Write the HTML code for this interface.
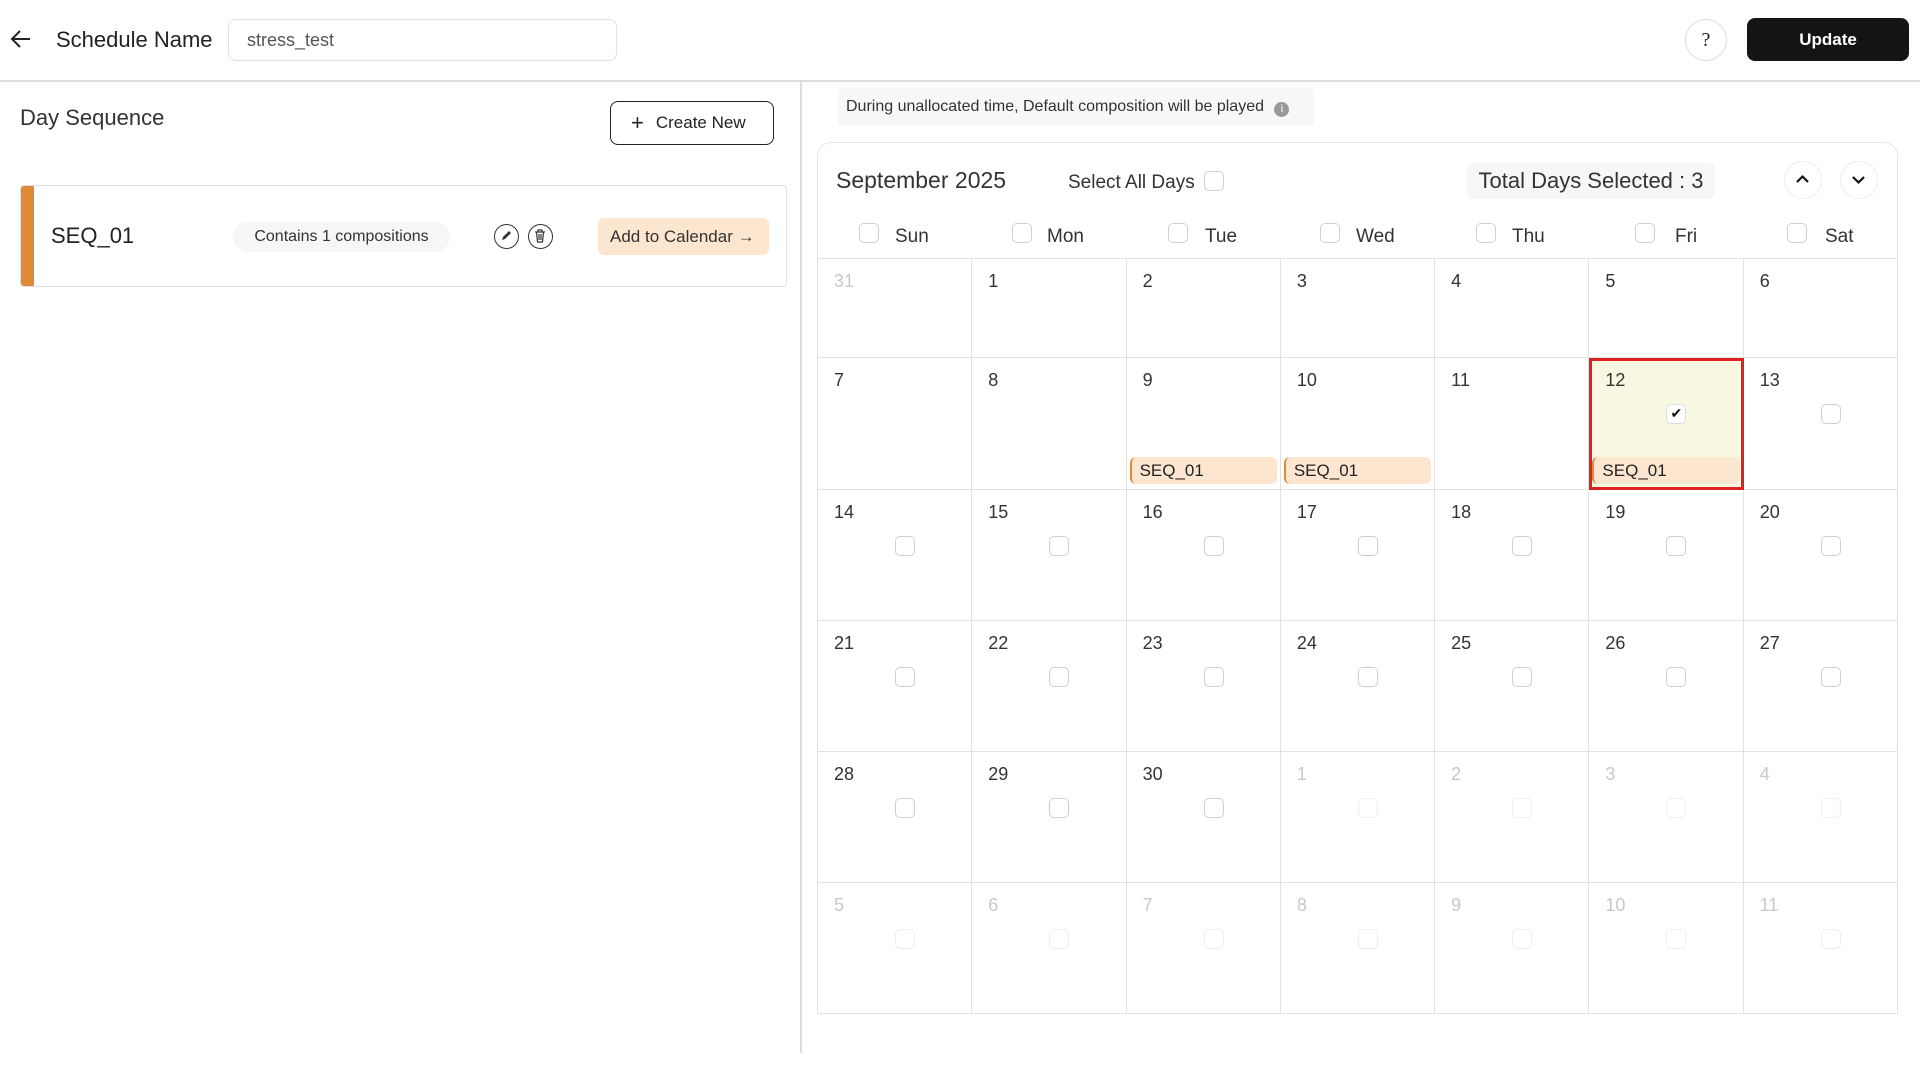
<!DOCTYPE html>
<html><head><meta charset="utf-8">
<style>
*{box-sizing:border-box;margin:0;padding:0}
body{width:1920px;height:1080px;background:#fff;font-family:"Liberation Sans",sans-serif;color:#222;position:relative;overflow:hidden}
.a{position:absolute}
.cb{position:absolute;width:20px;height:20px;border:1.5px solid #cfcfcf;border-radius:5px;background:#fff}
.grid{position:absolute;left:817px;top:258px;width:1081px;display:grid;grid-template-columns:repeat(7,1fr);grid-template-rows:99px 132px 131px 131px 131px 131px;border-top:1.5px solid #e2e2e2;border-left:1.5px solid #e2e2e2}
.c{position:relative;border-right:1.5px solid #e2e2e2;border-bottom:1.5px solid #e2e2e2;font-size:18px;color:#333}
.c .n{position:absolute;left:16px;top:12px}
.c.o{color:#c8c8c8}
.c .cb{left:77px;top:46px}
.c.o .cb{border-color:#eee}
.chip{position:absolute;left:3px;right:3px;top:99px;height:27px;background:#fde6d0;border-left:2px solid #e08a36;border-radius:6px;font-size:17px;padding:4px 8px;color:#222}
.wd{position:absolute;top:226px;font-size:19px;color:#333}
</style></head><body>
<!-- header -->
<svg class="a" style="left:10px;top:28px" width="22" height="22" viewBox="0 0 22 22"><path d="M20 11H3M10 3L2 11l8 8" fill="none" stroke="#222" stroke-width="2"/></svg>
<div class="a" style="left:56px;top:27px;font-size:22px;color:#222">Schedule Name</div>
<div class="a" style="left:228px;top:19px;width:389px;height:42px;border:1.5px solid #e0e0e0;border-radius:8px;font-size:18px;color:#555;padding:10px 18px">stress_test</div>
<div class="a" style="left:1685px;top:19px;width:42px;height:42px;border:1.5px solid #ddd;border-radius:50%;text-align:center;line-height:40px;font-family:'Liberation Serif',serif;font-size:20px">?</div>
<div class="a" style="left:1747px;top:18px;width:162px;height:43px;background:#141414;border-radius:8px;color:#fff;font-size:17px;font-weight:bold;text-align:center;line-height:43px">Update</div>
<div class="a" style="left:0;top:80px;width:1920px;height:1.5px;background:#ddd"></div>
<div class="a" style="left:800px;top:81px;width:1.5px;height:972px;background:#ddd"></div>
<!-- left -->
<div class="a" style="left:20px;top:105px;font-size:22px;color:#333">Day Sequence</div>
<div class="a" style="left:610px;top:101px;width:164px;height:44px;border:1.5px solid #222;border-radius:8px;font-size:17px;line-height:41px;padding-left:20px"><span style="font-size:22px;vertical-align:-2px;margin-right:12px">+</span>Create New</div>
<div class="a" style="left:20px;top:185px;width:767px;height:102px;border:1.5px solid #e0e0e0;border-radius:4px;overflow:hidden">
 <div class="a" style="left:0;top:0;width:13px;height:100%;background:#e08a36"></div>
 <div class="a" style="left:30px;top:37px;font-size:22px;color:#222">SEQ_01</div>
 <div class="a" style="left:212px;top:36px;width:217px;height:30px;background:#f6f6f6;border-radius:15px;font-size:16px;text-align:center;line-height:30px;color:#333">Contains 1 compositions</div>
 <div class="a" style="left:473px;top:38px;width:25px;height:25px;border:1.5px solid #333;border-radius:50%"><svg width="22" height="22" viewBox="0 0 22 22"><path d="M7 15l1-3 6-6 2 2-6 6z" fill="#333"/></svg></div>
 <div class="a" style="left:507px;top:38px;width:25px;height:25px;border:1.5px solid #333;border-radius:50%"><svg width="22" height="22" viewBox="0 0 22 22"><path d="M6 7h10M9 7V5h4v2M7.5 7l1 10h5l1-10M10 9v6M12 9v6" fill="none" stroke="#333" stroke-width="1.2"/></svg></div>
 <div class="a" style="left:577px;top:32px;width:171px;height:37px;background:#fde6d0;border-radius:6px;font-size:17px;line-height:37px;padding-left:12px;color:#333">Add to Calendar →</div>
</div>
<!-- right -->
<div class="a" style="left:838px;top:88px;width:476px;height:38px;background:#f7f7f7;border-radius:4px;font-size:16px;line-height:38px;padding-left:8px;color:#333">During unallocated time, Default composition will be played <span style="display:inline-block;width:15px;height:15px;border-radius:50%;background:#999;color:#fff;font-size:11px;line-height:15px;text-align:center;margin-left:6px;vertical-align:-1px">i</span></div>
<div class="a" style="left:817px;top:142px;width:1081px;height:872px;border:1.5px solid #e6e6e6;border-radius:14px 14px 0 0"></div>
<div class="a" style="left:836px;top:167px;font-size:23px;color:#333">September 2025</div>
<div class="a" style="left:1068px;top:172px;font-size:19px;color:#333">Select All Days</div>
<div class="cb" style="left:1204px;top:171px"></div>
<div class="a" style="left:1467px;top:163px;width:248px;height:36px;background:#f7f7f7;border-radius:6px;font-size:22px;line-height:36px;text-align:center;color:#333">Total Days Selected : 3</div>
<div class="a" style="left:1784px;top:161px;width:38px;height:38px;border:1.5px solid #eee;border-radius:50%"><svg width="35" height="35" viewBox="0 0 35 35"><path d="M12 20l5.5-5.5L23 20" fill="none" stroke="#111" stroke-width="2.2"/></svg></div>
<div class="a" style="left:1840px;top:161px;width:38px;height:38px;border:1.5px solid #eee;border-radius:50%"><svg width="35" height="35" viewBox="0 0 35 35"><path d="M12 15l5.5 5.5L23 15" fill="none" stroke="#111" stroke-width="2.2"/></svg></div>
<div class="cb" style="left:859px;top:223px"></div><div class="wd" style="left:895px">Sun</div>
<div class="cb" style="left:1012px;top:223px"></div><div class="wd" style="left:1047px">Mon</div>
<div class="cb" style="left:1168px;top:223px"></div><div class="wd" style="left:1205px">Tue</div>
<div class="cb" style="left:1320px;top:223px"></div><div class="wd" style="left:1356px">Wed</div>
<div class="cb" style="left:1476px;top:223px"></div><div class="wd" style="left:1512px">Thu</div>
<div class="cb" style="left:1635px;top:223px"></div><div class="wd" style="left:1675px">Fri</div>
<div class="cb" style="left:1787px;top:223px"></div><div class="wd" style="left:1825px">Sat</div>
<div class="grid">
<div class="c o"><span class="n">31</span></div><div class="c"><span class="n">1</span></div><div class="c"><span class="n">2</span></div><div class="c"><span class="n">3</span></div><div class="c"><span class="n">4</span></div><div class="c"><span class="n">5</span></div><div class="c"><span class="n">6</span></div>
<div class="c"><span class="n">7</span></div><div class="c"><span class="n">8</span></div><div class="c"><span class="n">9</span><div class="chip">SEQ_01</div></div><div class="c"><span class="n">10</span><div class="chip">SEQ_01</div></div><div class="c"><span class="n">11</span></div>
<div class="c" style="background:#f7f7e2;outline:3px solid #e02020;outline-offset:-3px"><span class="n">12</span><div class="cb" style="left:77px;top:46px;border-color:#ddd;text-align:center;font-size:14px;line-height:17px;color:#111">✔</div><div class="chip">SEQ_01</div></div>
<div class="c"><span class="n">13</span><div class="cb"></div></div>
<div class="c"><span class="n">14</span><div class="cb"></div></div><div class="c"><span class="n">15</span><div class="cb"></div></div><div class="c"><span class="n">16</span><div class="cb"></div></div><div class="c"><span class="n">17</span><div class="cb"></div></div><div class="c"><span class="n">18</span><div class="cb"></div></div><div class="c"><span class="n">19</span><div class="cb"></div></div><div class="c"><span class="n">20</span><div class="cb"></div></div>
<div class="c"><span class="n">21</span><div class="cb"></div></div><div class="c"><span class="n">22</span><div class="cb"></div></div><div class="c"><span class="n">23</span><div class="cb"></div></div><div class="c"><span class="n">24</span><div class="cb"></div></div><div class="c"><span class="n">25</span><div class="cb"></div></div><div class="c"><span class="n">26</span><div class="cb"></div></div><div class="c"><span class="n">27</span><div class="cb"></div></div>
<div class="c"><span class="n">28</span><div class="cb"></div></div><div class="c"><span class="n">29</span><div class="cb"></div></div><div class="c"><span class="n">30</span><div class="cb"></div></div><div class="c o"><span class="n">1</span><div class="cb"></div></div><div class="c o"><span class="n">2</span><div class="cb"></div></div><div class="c o"><span class="n">3</span><div class="cb"></div></div><div class="c o"><span class="n">4</span><div class="cb"></div></div>
<div class="c o"><span class="n">5</span><div class="cb"></div></div><div class="c o"><span class="n">6</span><div class="cb"></div></div><div class="c o"><span class="n">7</span><div class="cb"></div></div><div class="c o"><span class="n">8</span><div class="cb"></div></div><div class="c o"><span class="n">9</span><div class="cb"></div></div><div class="c o"><span class="n">10</span><div class="cb"></div></div><div class="c o"><span class="n">11</span><div class="cb"></div></div>
</div>
</body></html>
